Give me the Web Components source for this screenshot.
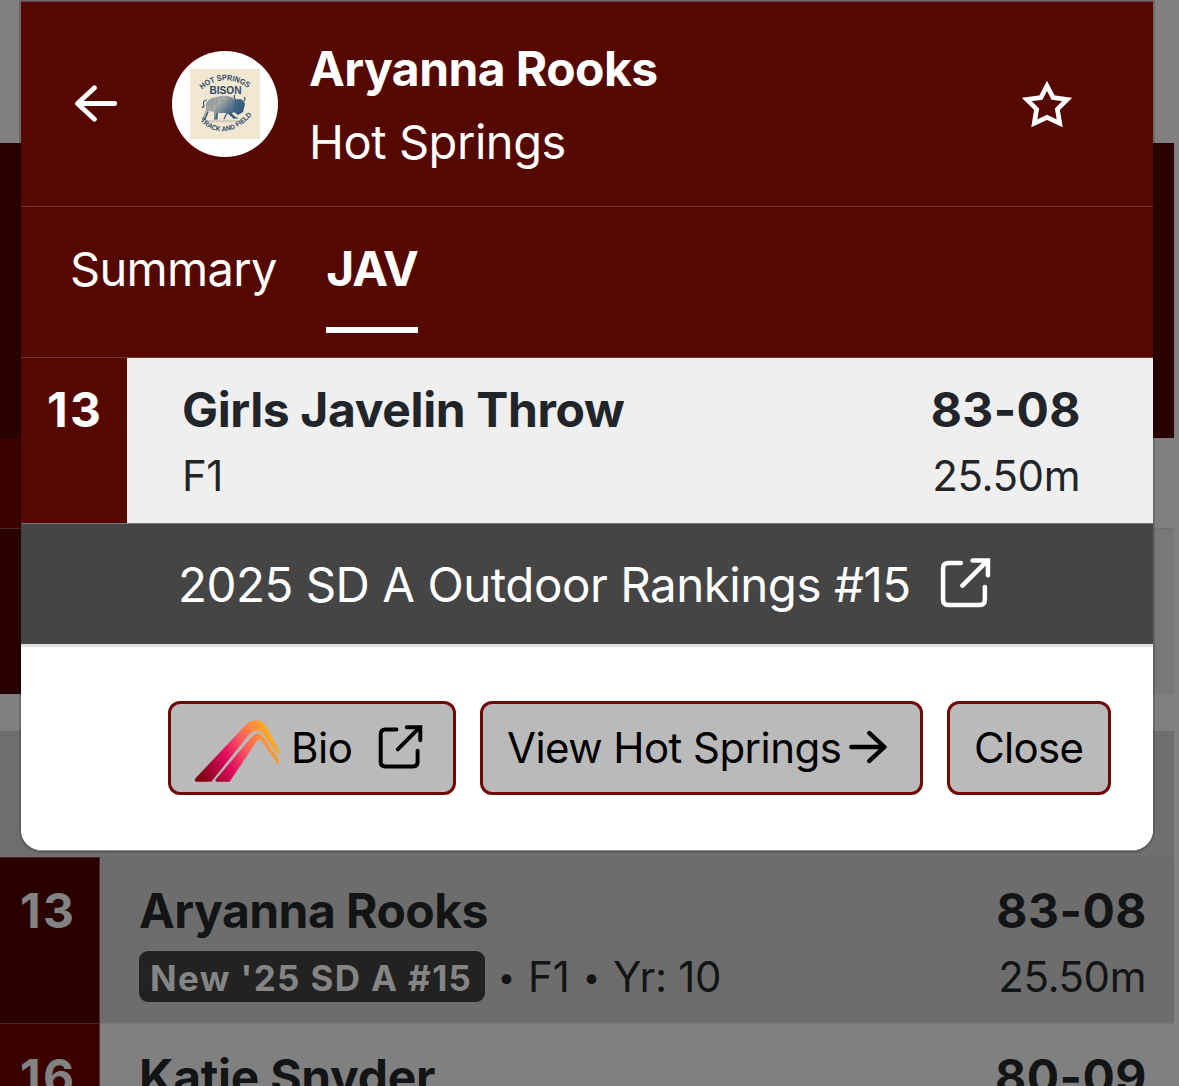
<!DOCTYPE html>
<html lang="en">
<head>
<meta charset="utf-8">
<title>Javelin results</title>
<style>
html,body{margin:0;height:1086px;overflow:hidden;background:#808080}
body{font-family:Inter,"Liberation Sans",sans-serif;position:relative}
</style>
</head>
<body>
<results-page></results-page>
<athlete-dialog></athlete-dialog>
<script>
const define = (name, html) => customElements.define(name, class extends HTMLElement {
  constructor() {
    super();
    const t = document.createElement('template');
    t.innerHTML = html;
    this.attachShadow({ mode: 'open' }).append(t.content.cloneNode(true));
  }
});

define('open-icon', `<style>:host{display:block;flex:none}svg{display:block;width:100%;height:100%}</style>
<svg viewBox="0 0 50 50" fill="none" stroke="currentColor" stroke-width="4.4" stroke-linecap="round" stroke-linejoin="round"><path d="M20.500 5H8Q3 5 3 10V41Q3 46 8 46H39Q44 46 44 41V28.500"/><path d="M22 27 46 3"/><path stroke-linejoin="miter" d="M32 2.500H47V17"/></svg>`);

define('arrow-icon', `<style>:host{display:block;flex:none}svg{display:block;width:100%;height:100%;overflow:visible}:host([flip]) svg{transform:scaleX(-1)}</style>
<svg viewBox="0 0 42 36" fill="none" stroke="currentColor" stroke-width="4.900" stroke-linecap="round" stroke-linejoin="round"><path d="M2.300 18H39M22.500 2.300 39.500 18 22.500 33.700"/></svg>`);

define('star-icon', `<style>:host{display:block;flex:none;color:#fff}svg{display:block}</style>
<svg width="50" height="50" viewBox="0 0 50 50" fill="none" stroke="currentColor" stroke-width="4.700"><path d="M25 6.800 31.100 18.500 45.200 20.500 35.400 30.200 37.700 44.300 25 38.300 12.300 44.300 14.600 30.200 4.800 20.500 18.900 18.500Z"/></svg>`);

define('summit-logo', `<style>:host{display:block;flex:none;margin:7px 2px 0 -1px}svg{display:block}</style>
<svg width="85" height="62" viewBox="0 0 86 62"><defs>
<linearGradient id="g" gradientUnits="userSpaceOnUse" x1="8" y1="66" x2="84" y2="24"><stop offset="0" stop-color="#7c0008"/><stop offset=".14" stop-color="#98052a"/><stop offset=".4" stop-color="#e00b60"/><stop offset=".64" stop-color="#fb5560"/><stop offset=".82" stop-color="#ff8443"/><stop offset="1" stop-color="#fbb024"/></linearGradient></defs>
<path fill="url(#g)" d="M3 62Q-1 62 2 58L53 4Q58 0 63 0Q69 0 73 6Q81 19 86 31V36L70 14Q67 10.500 64 10.500Q60 10.500 56 14L17.500 62Z"/>
<path fill="url(#g)" d="M23 62Q20 61 23 58.500L59 16Q62 13 65 13Q68 13 71 18L86 40V46L69 22Q66 17 63 22L36 62Z"/></svg>`);

define('team-crest', `<style>:host{display:flex;align-items:center;justify-content:center;flex:none;width:106px;height:106px;border-radius:50%;background:#fff}svg{display:block}text{font-family:"Liberation Sans Narrow","Liberation Sans",sans-serif;font-weight:700;fill:#2c4867}</style>
<svg width="70" height="70" viewBox="0 0 70 70"><defs>
<path id="top" d="M12 20.500Q35 2 60 20.500"/><path id="bot" d="M10 52Q34 75 61 47"/>
<linearGradient id="b" x1="0" x2="1" y1="0" y2=".5"><stop stop-color="#8298a8"/><stop offset=".45" stop-color="#a9aaa4"/><stop offset=".72" stop-color="#58758f"/><stop offset="1" stop-color="#2e5378"/></linearGradient></defs>
<rect width="70" height="70" fill="#f2e7d3"/>
<text font-size="8"><textPath href="#top" textLength="50" lengthAdjust="spacingAndGlyphs">HOT SPRINGS</textPath></text>
<text x="19.500" y="25" font-size="11.500" textLength="32" lengthAdjust="spacingAndGlyphs">BISON</text>
<ellipse cx="32" cy="52" rx="16" ry="1.400" fill="#d3ccbb"/>
<path fill="url(#b)" d="M16 35Q18 29 25 28.500Q31 26 38 27Q43 28 45 31Q53 28 55 35L53 43L48 46L44 43L41 45L46 49L44 50L37 44L28 44L27 50H24V43L19 42L15 50H12L16 41Z"/>
<path fill="none" stroke="#315577" stroke-width="1.200" d="M17 31Q12 31 14 37L12 39M46 31Q43 28 45 26M54 32Q56 30 54 28M18 43 15 50H12M27 44V50H24M40 44 46 49H48M37 44 34 50"/>
<path fill="#3b5f80" opacity=".75" d="M45 31Q51 30 54 34L52 42L48 45L43 40Z"/>
<path stroke="#6d8596" stroke-width=".6" opacity=".7" d="M22 31V41M27 30V42M32 30V42M37 30V41M41 32V42"/>
<text font-size="7"><textPath href="#bot" textLength="60" lengthAdjust="spacingAndGlyphs">TRACK AND FIELD</textPath></text></svg>`);

define('result-row', `<style>
:host{display:flex;height:var(--h,166px);box-sizing:border-box;color:#131416;background:var(--bg,#808080)}
.rank{width:100px;box-sizing:border-box;background:var(--rank,#290200);color:#838383;font-size:48px;font-weight:700;line-height:60px;padding:23px 0 0 20px;border-top:1px solid var(--line,#4c2726);border-right:1px solid #572e2d;flex:none;letter-spacing:2.200px}
.main{flex:1;display:flex;flex-direction:column;padding:23px 0 0 39px;border-top:1px solid var(--mline,#707070)}
.marks{padding:23px 27px 0 0;text-align:right;border-top:1px solid var(--mline,#707070)}
.name,.mark{font-size:48px;font-weight:700;line-height:60px;white-space:nowrap}
.name{letter-spacing:var(--name-ls,-.55px)}.mark{letter-spacing:.5px}
.metric,.meta{font-size:42px;line-height:52px;padding-top:10px;white-space:nowrap}
.metric{letter-spacing:-.45px;padding-right:1px}
.meta{display:flex}
</style>
<div class="rank"><slot name="rank"></slot></div>
<div class="main"><div class="name"><slot name="name"></slot></div><div class="meta"><slot name="meta"></slot></div></div>
<div class="marks"><div class="mark"><slot name="mark"></slot></div><div class="metric"><slot name="metric"></slot></div></div>`);

define('rank-badge', `<style>:host{display:block;box-sizing:border-box;width:346px;height:51px;border-radius:9px;background:#222;color:#858585;font-size:35px;font-weight:700;line-height:55px;padding-left:11px;letter-spacing:1.350px;white-space:nowrap}</style><slot></slot>`);

define('results-page', `<style>
:host{display:flex;flex-direction:column;height:1086px;width:1174px;overflow:hidden;background:#808080;border-right:5px solid #808080}
.top{height:143px}.banner{height:295px;background:#290200}
.strip{height:90px}.strip i{display:block;width:99px;height:100%;background:#3a0000}
.gap{height:37px}.section{height:126px;background:#6e6e6e}
result-row,.top,.banner,.strip,.gap,.section{flex:none}
.r3{--bg:#787878}.r13{--bg:#6d6d6d;--mline:#6a6a6a}.r16{--rank:#3a0000;--mline:#777;--name-ls:-.3px}
.dot{width:43px;text-align:center;font-size:31px}
.yr{letter-spacing:-.3px}
</style>
<div class="top"></div><div class="banner"></div><div class="strip"><i></i></div>
<result-row class="r3"><span slot="rank">3</span></result-row>
<div class="gap"></div><div class="section"></div>
<result-row class="r13"><span slot="rank">13</span><span slot="name">Aryanna Rooks</span>
<rank-badge slot="meta">New '25 SD A #15</rank-badge><span slot="meta" class="dot">•</span><span slot="meta">F1</span><span slot="meta" class="dot">•</span><span slot="meta" class="yr">Yr: 10</span>
<span slot="mark">83-08</span><span slot="metric">25.50m</span></result-row>
<result-row class="r16"><span slot="rank">16</span><span slot="name">Katie Snyder</span><span slot="mark">80-09</span></result-row>`);

define('action-button', `<style>:host{display:block;flex:none}
button{all:unset;box-sizing:border-box;display:flex;align-items:center;width:100%;height:94px;border:3px solid #720909;border-radius:12px;background:#bababa;color:#000;font-size:42px;line-height:52px;padding:0 0 1px 24px;white-space:nowrap}</style><button><slot></slot></button>`);

define('athlete-dialog', `<style>
:host{position:absolute;left:21px;top:1px;width:1132px;height:850px;box-sizing:border-box;display:flex;flex-direction:column;border-top:1px solid #6b4543;border-bottom:1px solid #888;border-radius:0 0 21px 21px;background:#fff;overflow:hidden;box-shadow:0 0 0 2px rgba(0,0,0,.17);color:#fff}
header{height:204px;background:#540800;display:flex;align-items:flex-start;box-sizing:border-box;flex:none}
.back{width:42px;height:37px;margin:83px 0 0 54px}
team-crest{margin:49px 0 0 55px}
.who{margin:37px 0 0 31px;flex:1;white-space:nowrap}
.name{font-size:48px;font-weight:700;line-height:60px;letter-spacing:-.57px}
.team{font-size:47px;line-height:60px;margin-top:13px;letter-spacing:-.45px}
star-icon{margin:77px 81px 0 0}
nav{height:151px;box-sizing:border-box;border-top:1px solid #703431;background:#540800;display:flex;padding-left:49px;font-size:47px;line-height:60px;flex:none}
nav span{display:block;height:126px;box-sizing:border-box;padding-top:32px;white-space:nowrap}
.sum{width:206px;margin-right:50px;letter-spacing:-.7px}
.jav{width:92px;font-size:48px;font-weight:700;border-bottom:6px solid #fff;text-align:center;letter-spacing:-1.200px}
.event{height:166px;box-sizing:border-box;border-top:1px solid #723733;display:flex;color:#212529;flex:none;background:#540800}
.rank{width:106px;color:#fff;font-weight:700;font-size:48px;line-height:60px;padding:22px 0 0 26px;box-sizing:border-box;letter-spacing:2.200px}
.info{flex:1;display:flex;justify-content:space-between;background:#efefef;padding:22px 72px 0 55px}
.h{font-size:48px;font-weight:700;line-height:60px;white-space:nowrap;letter-spacing:-.37px}
.h.mark{letter-spacing:.4px}
.s{font-size:42px;line-height:52px;padding-top:10px;letter-spacing:-.45px}
.right{text-align:right}.right .s{padding-right:1px}
.rankings{height:121px;box-sizing:border-box;border-top:1px solid #777;background:#454545;display:flex;font-size:47.500px;line-height:60px;padding:31px 0 0 157px;white-space:nowrap;flex:none;letter-spacing:-.5px}
.rankings span{width:762px}
.rankings open-icon{width:51px;height:51px;margin-top:3px}
footer{flex:1;border-top:3px solid #dee2e6;background:#fff;display:flex;justify-content:flex-end;align-items:flex-start;gap:24px;padding:54px 42px 0 0}
.bio{width:288px}.view{width:443px}.close{width:164px}
.bt{width:87px;margin-left:10px;letter-spacing:-.4px}
.bio open-icon{width:45px;height:45px;margin-top:-1px}
.vt{width:342px;letter-spacing:-.55px}.view arrow-icon{width:38px;height:32px;margin-top:-2px}
.close span{letter-spacing:-.7px}
</style>
<header><arrow-icon class="back" flip></arrow-icon><team-crest></team-crest><div class="who"><div class="name"><span>Aryanna Rooks</span></div><div class="team"><span>Hot Springs</span></div></div><star-icon></star-icon></header>
<nav><span class="sum">Summary</span><span class="jav">JAV</span></nav>
<section class="event"><div class="rank">13</div><div class="info"><div><div class="h">Girls Javelin Throw</div><div class="s">F1</div></div><div class="right"><div class="h mark">83-08</div><div class="s">25.50m</div></div></div></section>
<div class="rankings"><span>2025 SD A Outdoor Rankings #15</span><open-icon></open-icon></div>
<footer><action-button class="bio"><summit-logo></summit-logo><span class="bt">Bio</span><open-icon></open-icon></action-button>
<action-button class="view"><span class="vt">View Hot Springs</span><arrow-icon></arrow-icon></action-button>
<action-button class="close"><span>Close</span></action-button></footer>`);
</script>
</body>
</html>
